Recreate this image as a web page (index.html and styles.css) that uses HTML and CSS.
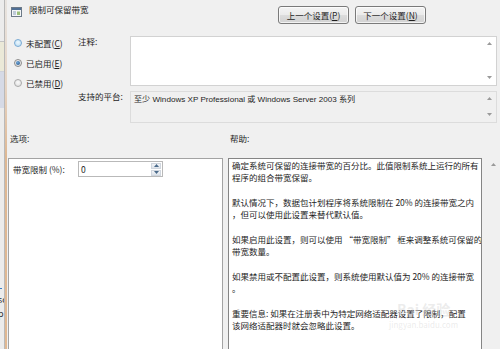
FILE: index.html
```html
<!DOCTYPE html>
<html lang="zh-CN">
<head>
    <meta charset="UTF-8">
    <title>限制可保留带宽</title>
    <link rel="stylesheet" href="styles.css">
</head>
<body>

<div class="screen">
    <div class="backdrop">
        <div class="bd bd-top"></div>
        <div class="bd bd-yellow"></div>
        <div class="bd bd-blue"></div>
        <div class="bd bd-rest">
            <span class="bd-mark"></span>
            <span class="bd-text">sc</span>
            <span class="bd-text">p</span>
        </div>
    </div>
    <div class="frame"></div>

    <div class="dialog">
        <div class="head">
            <svg class="icon" width="11" height="10" viewBox="0 0 11 10">
                <rect x="0.5" y="0.5" width="10" height="9" fill="#f4f6f8" stroke="#6d7a88"/>
                <rect x="1" y="1" width="9" height="2" fill="#4f6f95"/>
                <rect x="2" y="4.5" width="3" height="1" fill="#8aa0b8"/>
                <rect x="2" y="6.5" width="3" height="1" fill="#8aa0b8"/>
                <rect x="6" y="4.5" width="3" height="3.5" fill="#9bbf7a"/>
            </svg>
            <span class="title">限制可保留带宽</span>
            <div class="nav">
                <button class="btn">上一个设置(<u>P</u>)</button>
                <button class="btn">下一个设置(<u>N</u>)</button>
            </div>
        </div>

        <div class="top">
            <div class="states">
                <div class="radio"><span class="dot dot-hover"></span>未配置(<u>C</u>)</div>
                <div class="radio"><span class="dot dot-on"></span>已启用(<u>E</u>)</div>
                <div class="radio"><span class="dot"></span>已禁用(<u>D</u>)</div>
            </div>
            <div class="fields">
                <div class="field">
                    <span class="flabel">注释:</span>
                    <div class="box comment">
                        <div class="box-body"></div>
                        <div class="vscroll">
                            <svg width="5" height="3"><path d="M0 3L2.5 0L5 3Z" fill="#9a9a9a"/></svg>
                            <svg width="5" height="3"><path d="M0 0L2.5 3L5 0Z" fill="#9a9a9a"/></svg>
                        </div>
                    </div>
                </div>
                <div class="field">
                    <span class="flabel">支持的平台:</span>
                    <div class="box platform">
                        <div class="box-body latin">至少 Windows XP Professional 或 Windows Server 2003 系列</div>
                        <div class="vscroll">
                            <svg width="5" height="3"><path d="M0 3L2.5 0L5 3Z" fill="#9a9a9a"/></svg>
                            <svg width="5" height="3"><path d="M0 0L2.5 3L5 0Z" fill="#9a9a9a"/></svg>
                        </div>
                    </div>
                </div>
            </div>
        </div>

        <div class="section-labels">
            <span>选项:</span>
            <span>帮助:</span>
        </div>

        <div class="panels">
            <div class="options">
                <div class="opt-row">
                    <span class="opt-label">带宽限制 (%):</span>
                    <div class="spin">
                        <span class="spin-value">0</span>
                        <div class="spin-btns">
                            <span class="spin-btn"><svg width="5" height="3"><path d="M0 3L2.5 0L5 3Z" fill="#4a6a8a"/></svg></span>
                            <span class="spin-btn"><svg width="5" height="3"><path d="M0 0L2.5 3L5 0Z" fill="#4a6a8a"/></svg></span>
                        </div>
                    </div>
                </div>
            </div>
            <div class="help">
                <p>确定系统可保留的连接带宽的百分比。此值限制系统上运行的所有<br>程序的组合带宽保留。</p>
                <p>默认情况下，数据包计划程序将系统限制在 20% 的连接带宽之内<br>，但可以使用此设置来替代默认值。</p>
                <p>如果启用此设置，则可以使用 “带宽限制” 框来调整系统可保留的<br>带宽数量。</p>
                <p>如果禁用或不配置此设置，则系统使用默认值为 20% 的连接带宽<br>。</p>
                <p>重要信息: 如果在注册表中为特定网络适配器设置了限制，配置<br>该网络适配器时就会忽略此设置。</p>
                <div class="watermark">
                    <span class="wm-big">Bai 经验</span>
                    <span class="wm-small">jingyan.baidu.com</span>
                </div>
            </div>
            <div class="help-scroll">
                <svg width="5" height="3"><path d="M0 3L2.5 0L5 3Z" fill="#9a9a9a"/></svg>
            </div>
        </div>
    </div>
</div>

</body>
</html>
```

FILE: styles.css
```css
* {
    box-sizing: border-box;
}
body {
    margin: 0;
    width: 500px;
    height: 349px;
    overflow: hidden;
    font-family: "Noto Sans CJK SC", "Noto Sans", sans-serif;
    font-size: 8.5px;
    color: #1e1e1e;
    background: #f0f0f0;
}
u {
    text-decoration: underline;
}
.screen {
    display: flex;
    height: 349px;
}

/* window behind the dialog */
.backdrop {
    width: 9px;
    display: flex;
    flex-direction: column;
    border-right: 1px solid #b9b9b9;
    overflow: hidden;
}
.bd-top {
    height: 42px;
    background: #ececec;
    border-bottom: 1px solid #c4c4c4;
}
.bd-yellow {
    height: 30px;
    background: #ebe9d8;
    border-bottom: 1px solid #cfd2da;
}
.bd-blue {
    height: 36px;
    background: #d6dae6;
}
.bd-rest {
    flex: 1;
    background: #ececec;
    display: flex;
    flex-direction: column;
    padding-top: 180px;
    font-size: 9px;
    line-height: 14px;
    color: #333;
}
.bd-mark {
    width: 2px;
    height: 1px;
    background: #3c7fc0;
    margin-bottom: 4px;
}
.bd-text {
    margin-left: -2px;
}
.frame {
    width: 3px;
    background: linear-gradient(#e8e4e0, #e6d4c4 25%, #deb893 45%, #e0b892);
}

/* dialog */
.dialog {
    flex: 1;
    display: flex;
    flex-direction: column;
    background: #f0f0f0;
    padding-left: 1px;
}
.head {
    height: 36px;
    display: flex;
    align-items: flex-start;
    padding-left: 3px;
    padding-right: 74px;
}
.icon {
    margin-top: 7px;
}
.title {
    margin-left: 7px;
    margin-top: 3px;
    line-height: 12px;
}
.nav {
    display: flex;
    gap: 6px;
    margin-top: 6px;
    margin-left: auto;
}
.btn {
    width: 71px;
    height: 18px;
    padding: 0;
    font-family: inherit;
    font-size: 8.5px;
    color: #1e1e1e;
    border: 1px solid #7a7a7a;
    border-radius: 3px;
    background: linear-gradient(#f4f4f4, #ebebeb 48%, #dcdcdc 52%, #d2d2d2);
    box-shadow: inset 0 0 0 1px rgba(255, 255, 255, 0.7);
}

.top {
    height: 87px;
    display: flex;
}
.states {
    width: 70px;
    display: flex;
    flex-direction: column;
    gap: 6px;
    padding-left: 6px;
}
.radio {
    height: 14px;
    display: flex;
    align-items: center;
    line-height: 12px;
}
.dot {
    width: 8px;
    height: 8px;
    border-radius: 50%;
    border: 1px solid #a9a9a9;
    background: radial-gradient(circle at 50% 40%, #fafafa, #dadada);
    margin-right: 4px;
    display: flex;
    align-items: center;
    justify-content: center;
}
.dot-hover {
    border-color: #79aad4;
    background: radial-gradient(circle at 50% 40%, #eef8fe, #b4daf2);
}
.dot-on {
    border-color: #8c8c8c;
}
.dot-on::after {
    content: "";
    width: 4px;
    height: 4px;
    border-radius: 50%;
    background: radial-gradient(circle at 40% 35%, #6ea6d8, #1e4f86);
}
.fields {
    flex: 1;
    display: flex;
    flex-direction: column;
    gap: 5px;
    padding-right: 3px;
}
.field {
    display: flex;
}
.flabel {
    width: 52px;
    line-height: 12px;
    margin-top: -1px;
}
.box {
    flex: 1;
    display: flex;
    border: 1px solid #d2d2d2;
}
.comment {
    height: 50px;
    background: #fff;
}
.platform {
    height: 32px;
    background: #f0f0f0;
    border-color: #dcdcdc;
}
.box-body {
    flex: 1;
    padding: 2px 3px;
    line-height: 12px;
    white-space: nowrap;
}
.latin {
    font-family: "Liberation Sans", "Noto Sans CJK SC", sans-serif;
    font-size: 8.1px;
}
.vscroll {
    width: 14px;
    display: flex;
    flex-direction: column;
    align-items: center;
    justify-content: space-between;
    padding: 5px 0 6px;
}
.vscroll svg {
    display: block;
}

.section-labels {
    display: grid;
    grid-template-columns: 215px 254px 13px;
    column-gap: 5px;
    margin-top: 8px;
    height: 14px;
    line-height: 14px;
}
.section-labels span {
    padding-left: 2px;
}

.panels {
    flex: 1;
    display: grid;
    grid-template-columns: 215px 254px 13px;
    column-gap: 5px;
    margin-top: 13px;
}
.options {
    background: #fff;
    border: 1px solid #a3a3a3;
    border-bottom: none;
    padding: 2px 4px;
}
.opt-row {
    display: flex;
    align-items: center;
}
.opt-label {
    width: 65px;
    line-height: 12px;
}
.spin {
    width: 85px;
    height: 16px;
    display: flex;
    align-items: center;
    border: 1px solid #b9b9b9;
    background: #fff;
    padding: 0 1px 0 2px;
}
.spin-value {
    flex: 1;
    line-height: 12px;
}
.spin-btns {
    width: 10px;
    display: flex;
    flex-direction: column;
    gap: 1px;
}
.spin-btn {
    height: 6px;
    display: flex;
    align-items: center;
    justify-content: center;
    background: linear-gradient(#f2f4f7, #dde3ea);
    border: 1px solid #d0d6de;
}
.spin-btn svg {
    display: block;
}
.help {
    position: relative;
    background: #fff;
    border: 1px solid #858585;
    border-bottom: none;
    padding: 0 3px;
    line-height: 12px;
    white-space: nowrap;
    overflow: hidden;
}
.help p {
    margin: 0 0 13px;
}
.watermark {
    position: absolute;
    left: 160px;
    top: 143px;
    display: flex;
    flex-direction: column;
    align-items: center;
    color: rgba(200, 200, 200, 0.35);
    line-height: 15px;
}
.wm-big {
    font-size: 14px;
    font-weight: bold;
}
.wm-small {
    font-size: 8px;
}
.help-scroll {
    display: flex;
    justify-content: center;
    padding-top: 5px;
}
.help-scroll svg {
    display: block;
}
```
